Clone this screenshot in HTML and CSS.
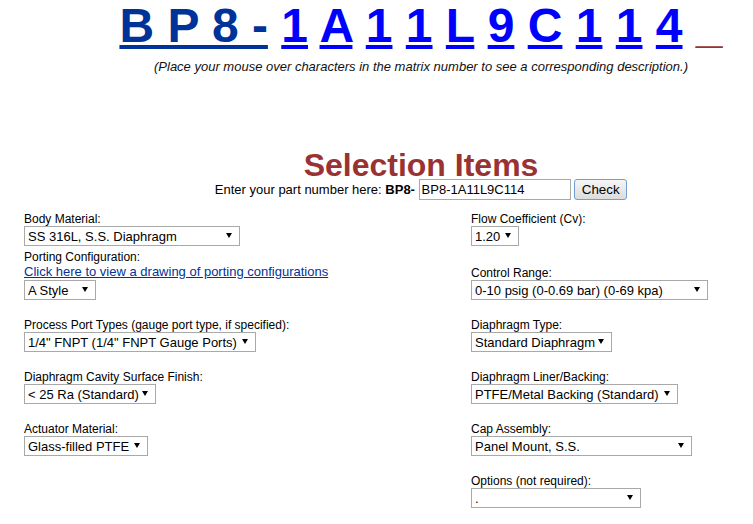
FILE: index.html
```html
<!DOCTYPE html>
<html lang="en">
<head>
  <meta charset="UTF-8">
  <title>BP8 Part Number Builder</title>
  <link rel="stylesheet" href="styles.css">
</head>
<body>
<div class="page">
  <!-- matrix number, each character is hoverable -->
  <div class="matrix">
    <a href="#" class="fixed">B P 8 -</a>
    <a href="#">1</a>
    <a href="#">A</a>
    <a href="#">1</a>
    <a href="#">1</a>
    <a href="#">L</a>
    <a href="#">9</a>
    <a href="#">C</a>
    <a href="#">1</a>
    <a href="#">1</a>
    <a href="#">4</a>
    <span class="tail">_</span>
  </div>
  <p class="hint">(Place your mouse over characters in the matrix number to see a corresponding description.)</p>

  <h1 class="title">Selection Items</h1>
  <div class="lookup">
    Enter your part number here: <b>BP8-</b> <input type="text" value="BP8-1A11L9C114"> <button>Check</button>
  </div>

  <div class="fields">
    <div class="col col-left">
      <div class="field tight">
        <label>Body Material:</label>
        <div class="pick sel-body"><select><option>SS 316L, S.S. Diaphragm</option></select></div>
      </div>
      <div class="field">
        <label>Porting Configuration:</label>
        <a href="#" class="drawing">Click here to view a drawing of porting configurations</a>
        <div class="pick sel-style"><select><option>A Style</option></select></div>
      </div>
      <div class="field">
        <label>Process Port Types (gauge port type, if specified):</label>
        <div class="pick sel-port"><select><option>1/4" FNPT (1/4" FNPT Gauge Ports)</option></select></div>
      </div>
      <div class="field">
        <label>Diaphragm Cavity Surface Finish:</label>
        <div class="pick sel-finish"><select><option>&lt; 25 Ra (Standard)</option></select></div>
      </div>
      <div class="field">
        <label>Actuator Material:</label>
        <div class="pick sel-actuator"><select><option>Glass-filled PTFE</option></select></div>
      </div>
    </div>

    <div class="col col-right">
      <div class="field wide">
        <label>Flow Coefficient (Cv):</label>
        <div class="pick sel-flow"><select><option>1.20</option></select></div>
      </div>
      <div class="field">
        <label>Control Range:</label>
        <div class="pick sel-range"><select><option>0-10 psig (0-0.69 bar) (0-69 kpa)</option></select></div>
      </div>
      <div class="field">
        <label>Diaphragm Type:</label>
        <div class="pick sel-type"><select><option>Standard Diaphragm</option></select></div>
      </div>
      <div class="field">
        <label>Diaphragm Liner/Backing:</label>
        <div class="pick sel-liner"><select><option>PTFE/Metal Backing (Standard)</option></select></div>
      </div>
      <div class="field">
        <label>Cap Assembly:</label>
        <div class="pick sel-cap"><select><option>Panel Mount, S.S.</option></select></div>
      </div>
      <div class="field">
        <label>Options (not required):</label>
        <div class="pick sel-options"><select><option>.</option></select></div>
      </div>
    </div>
  </div>
</div>
</body>
</html>
```

FILE: styles.css
```css
  body {
    font-family: "Liberation Sans", Arial, sans-serif;
    margin: 0 8px;
    color: #000;
    background-color: #fff;
    overflow: hidden;
  }
  .page {
    width: 826px;
  }

  /* matrix number */
  .matrix {
    text-align: center;
    font-size: 48px;
    font-weight: bold;
    line-height: 53px;
    margin-top: -1px;
    white-space: nowrap;
  }
  .matrix a {
    color: #0000ff;
  }
  .matrix a.fixed {
    color: #003399;
  }
  .matrix .tail {
    color: #993333;
  }
  .hint {
    text-align: center;
    font-size: 13px;
    font-style: italic;
    line-height: 15px;
    margin: 7px 0 0;
    color: #111;
  }

  .title {
    text-align: center;
    color: #993333;
    font-size: 32px;
    line-height: 27px;
    margin: 78px 0 0;
  }
  .lookup {
    text-align: center;
    font-size: 13px;
  }
  .lookup input {
    box-sizing: border-box;
    width: 152px;
    height: 21px;
    padding: 1px 2px;
    border: 1px solid #a9a9a9;
    font-family: "Liberation Sans", Arial, sans-serif;
    font-size: 13px;
    margin: 0;
  }
  .lookup button {
    box-sizing: border-box;
    width: 53px;
    height: 21px;
    padding: 0 6px;
    margin: 0;
    border: 1px solid #6f9fd5;
    border-radius: 3px;
    background: linear-gradient(#f5f5f5, #dcdcdc);
    font-family: "Liberation Sans", Arial, sans-serif;
    font-size: 13.33px;
    color: #000;
  }

  /* selection fields */
  .fields {
    display: flex;
    margin-top: 12px;
    padding-left: 16px;
  }
  .col-left {
    width: 447px;
  }
  .field {
    margin-bottom: 18px;
  }
  .field.tight {
    margin-bottom: 4px;
  }
  .field.wide {
    margin-bottom: 20px;
  }
  .field label {
    display: block;
    font-size: 12px;
    line-height: 14px;
  }
  .drawing {
    display: block;
    font-size: 13px;
    line-height: 16px;
    color: #003399;
  }

  .pick {
    position: relative;
    display: block;
  }
  .pick select {
    -webkit-appearance: none;
    appearance: none;
    box-sizing: border-box;
    width: 100%;
    height: 20px;
    margin: 0;
    padding: 0 8px 0 3px;
    border: 1px solid #a9a9a9;
    border-radius: 0;
    background-color: #fff;
    color: #000;
    font-family: "Liberation Sans", Arial, sans-serif;
    font-size: 13px;
  }
  .pick::after {
    content: "";
    position: absolute;
    right: 8px;
    top: 7px;
    border-left: 3px solid transparent;
    border-right: 3px solid transparent;
    border-top: 5px solid #000;
    pointer-events: none;
  }

  .sel-body { width: 216px; }
  .sel-style { width: 72px; }
  .sel-port { width: 232px; }
  .sel-finish { width: 132px; }
  .sel-actuator { width: 124px; }
  .sel-flow { width: 48px; }
  .sel-range { width: 237px; }
  .sel-type { width: 141px; }
  .sel-liner { width: 207px; }
  .sel-cap { width: 221px; }
  .sel-options { width: 170px; }
```
